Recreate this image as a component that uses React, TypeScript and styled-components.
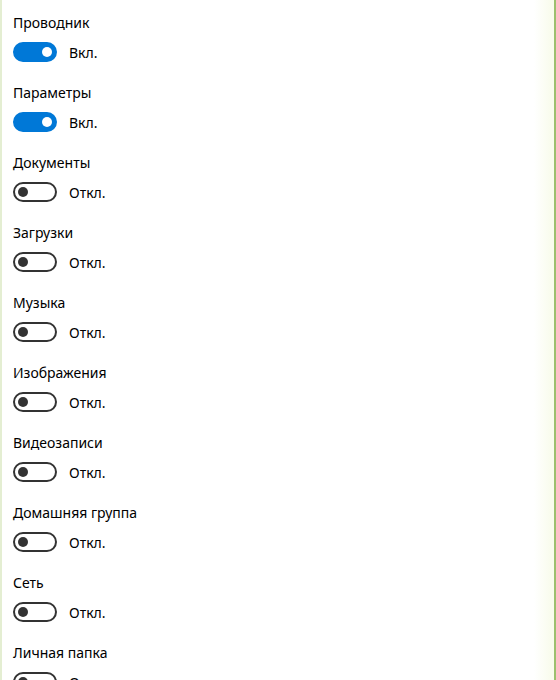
import React from "react";
import styled, { createGlobalStyle } from "styled-components";

const Global = createGlobalStyle`
  html, body { margin: 0; padding: 0; background: #fff; }
  body { font-family: "Noto Sans", "Open Sans", sans-serif; color: #000; }
`;

const Frame = styled.div`
  position: relative;
  width: 556px;
  height: 680px;
  overflow: hidden;
  box-sizing: border-box;
  border-left: 2px solid #e4eed2;
  display: flex;
`;

const Content = styled.div`
  flex: 1;
  padding: 12px 0 0 11px;
  display: flex;
  flex-direction: column;
`;

const EdgeRight = styled.div`
  width: 20px;
  flex: none;
  background: linear-gradient(to right, #ffffff, #f9fcee 80%);
  border-right: 2px solid #9cbf6e;
`;

const Row = styled.div`
  height: 70px;
  flex: none;
  display: flex;
  flex-direction: column;
`;

const Title = styled.div`
  font-size: 14px;
  line-height: 20px;
  height: 20px;
  padding-top: 1px;
`;

const ToggleLine = styled.div`
  margin-top: 9px;
  display: flex;
  align-items: center;
  gap: 12px;
  height: 20px;
`;

const Track = styled.div<{ $on: boolean }>`
  box-sizing: border-box;
  width: 44px;
  height: 20px;
  border-radius: 10px;
  display: flex;
  align-items: center;
  padding: 0 3px;
  justify-content: ${(p) => (p.$on ? "flex-end" : "flex-start")};
  background: ${(p) => (p.$on ? "#0078d7" : "#fff")};
  border: 2px solid ${(p) => (p.$on ? "#0078d7" : "#333")};
`;

const Knob = styled.div<{ $on: boolean }>`
  width: 10px;
  height: 10px;
  border-radius: 50%;
  background: ${(p) => (p.$on ? "#fff" : "#333")};
`;

const State = styled.span`
  font-size: 14px;
  line-height: 20px;
  padding-top: 1px;
`;

const items: [string, boolean][] = [
  ["Проводник", true],
  ["Параметры", true],
  ["Документы", false],
  ["Загрузки", false],
  ["Музыка", false],
  ["Изображения", false],
  ["Видеозаписи", false],
  ["Домашняя группа", false],
  ["Сеть", false],
  ["Личная папка", false],
];

export default function App() {
  return (
    <>
      <Global />
      <Frame>
        <Content>
          {items.map(([name, on]) => (
            <Row key={name}>
              <Title>{name}</Title>
              <ToggleLine>
                <Track $on={on}>
                  <Knob $on={on} />
                </Track>
                <State>{on ? "Вкл." : "Откл."}</State>
              </ToggleLine>
            </Row>
          ))}
        </Content>
        <EdgeRight />
      </Frame>
    </>
  );
}
